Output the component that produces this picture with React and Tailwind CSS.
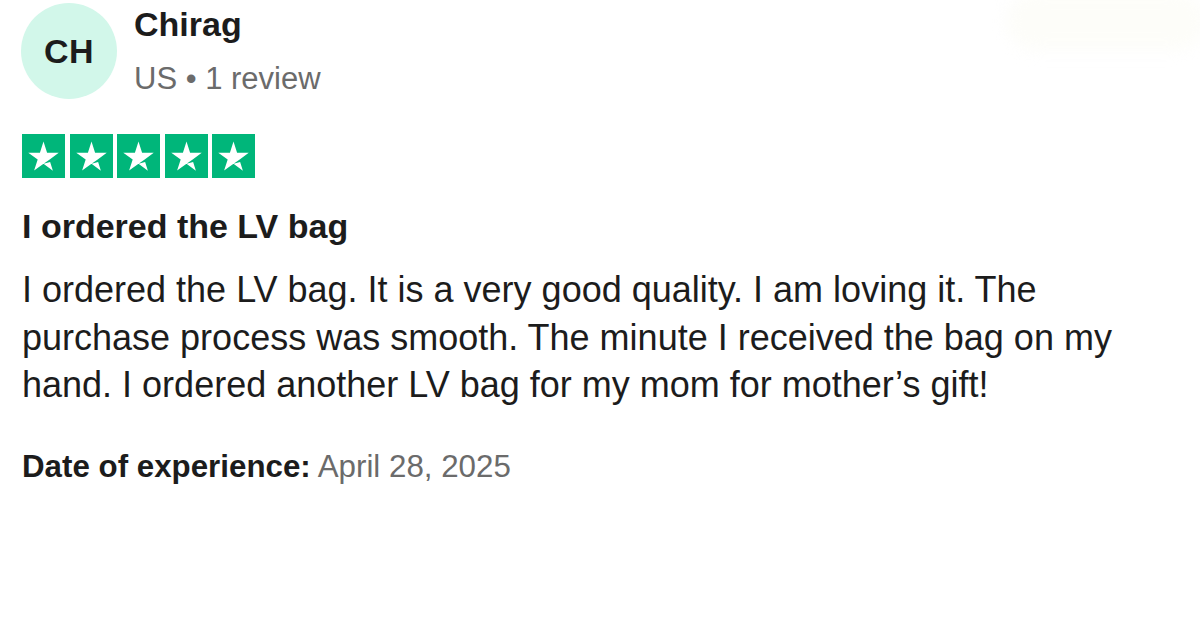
const Star = () => (
  <div className="w-[43px] h-[44px] bg-[#00b67a] flex items-center justify-center">
    <svg viewBox="0 0 24 24" className="w-[31px] h-[31px]" fill="#ffffff">
      <path d="M12 17.64l5.13-1.3 2.14 6.61L12 17.64zm11.8-8.55h-9.02L12 .39 9.22 9.09H.2l7.3 5.23-2.77 8.6 7.3-5.23 4.5-3.22L23.8 9.09z" />
    </svg>
  </div>
);

const App = () => {
  return (
    <div
      className="relative w-[1200px] h-[628px] bg-white overflow-hidden pl-[21px] text-[#1c1c1c]"
      style={{ fontFamily: '"Liberation Sans", Arial, sans-serif' }}
    >
      {/* faint blur top right */}
      <div className="absolute top-[-8px] right-[-6px] w-[200px] h-[58px] rounded-full bg-[#fdfdf9] blur-sm"></div>

      {/* Header */}
      <div className="flex items-start">
        <div className="mt-[3px] w-[96px] h-[96px] rounded-full bg-[#d2f7ea] flex items-center justify-center">
          <span className="text-[34px] font-bold tracking-[0.5px] leading-none">CH</span>
        </div>
        <div className="ml-[17px] mt-[4px] flex flex-col h-[96px]">
          <span className="text-[34px] leading-[40px] font-bold">Chirag</span>
          <span className="mt-[17px] text-[31px] leading-[36px] text-[#6b6b6b]">US • 1 review</span>
        </div>
      </div>

      {/* Stars */}
      <div className="mt-[34px] ml-[1px] flex gap-[4.5px]">
        <Star />
        <Star />
        <Star />
        <Star />
        <Star />
      </div>

      {/* Title */}
      <h2 className="mt-[28px] ml-[1px] text-[34px] leading-[40px] font-bold">I ordered the LV bag</h2>

      {/* Body */}
      <p className="mt-[20px] ml-[1px] w-[1130px] text-[36px] leading-[47.5px]">
        I ordered the LV bag. It is a very good quality. I am loving it. The purchase process was
        smooth. The minute I received the bag on my hand. I ordered another LV bag for my mom for
        mother’s gift!
      </p>

      {/* Date */}
      <p className="mt-[40px] ml-[1px] text-[31.3px] leading-[36px]">
        <span className="font-bold">Date of experience:</span>{" "}
        <span className="text-[#6b6b6b]">April 28, 2025</span>
      </p>
    </div>
  );
};

export default App;
